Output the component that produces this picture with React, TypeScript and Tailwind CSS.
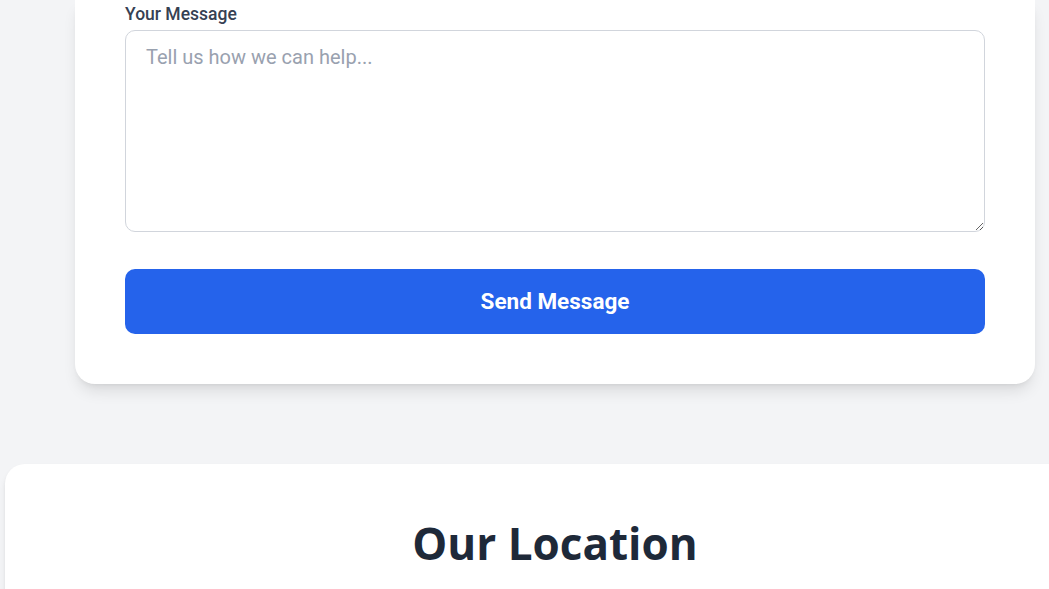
export default function App() {
  return (
    <div className="w-full min-h-screen overflow-hidden bg-gray-100 font-['Roboto',sans-serif]">
      <div className="w-[1110px]">
        {/* contact form card (top part scrolled away) */}
        <div className="mx-[75px] rounded-b-[20px] bg-white px-[50px] pb-[50px] pt-[2px] shadow-lg">
          <label className="mb-[3px] block text-[17.5px] font-medium leading-[25px] text-gray-700">
            Your Message
          </label>
          <textarea
            rows={6}
            placeholder="Tell us how we can help..."
            className="block h-[202px] w-full rounded-[10px] border border-gray-300 px-[20px] pb-[9px] pt-[11px] text-[20px] leading-[30px] text-gray-800 placeholder:text-gray-400 focus:outline-none"
          />
          <button className="mt-[37px] flex h-[65px] w-full items-center justify-center rounded-[10px] bg-[#2563eb] text-[22.5px] font-bold text-white">
            Send Message
          </button>
        </div>

        {/* location section */}
        <div className="mx-[5px] mt-[80px] rounded-t-[20px] bg-white pt-[54px] shadow-md">
          <h2 className="text-center font-['Open_Sans',sans-serif] text-[44px] font-bold leading-[50px] text-gray-800">
            Our Location
          </h2>
          <div className="h-[200px]" />
        </div>
      </div>
    </div>
  );
}
